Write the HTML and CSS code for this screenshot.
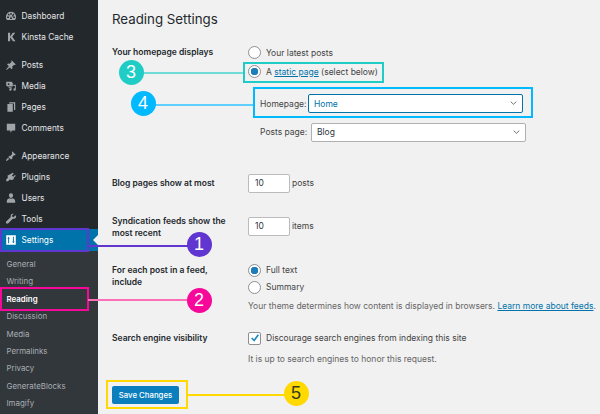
FILE: index.html
```html
<!DOCTYPE html>
<html lang="en">

<head>
    <meta charset="UTF-8">
    <meta name="viewport" content="width=device-width, initial-scale=1.0">
    <title>Reading Settings</title>
    <link rel="stylesheet" href="styles.css">
</head>

<body>
    <div class="admin">
        <nav class="sidebar">
            <ul class="menu">
                <li class="menu-item"><svg class="icon" viewBox="0 0 20 20"><path fill-rule="evenodd" d="M10 3a8.500 8.500 0 0 0-8.500 8.500c0 2 .7 3.700 1.800 5h13.400a8.400 8.400 0 0 0 1.800-5A8.500 8.500 0 0 0 10 3zM8.800 5h2.400v3H8.800zM4.500 7.500L6.200 6l2 2.200-1.600 1.500zM15.500 7.500l-2.400 3.800L11.500 10l2.300-4zM3.500 11h3v2.200h-3zM13.500 11h3v2.200h-3zM10 10.500l1.800 4.500H8.200z"/></svg>Dashboard</li>
                <li class="menu-item"><svg class="icon" viewBox="0 0 20 20"><path d="M5 3h3.500v6L13 3h4l-5 6.500L17.500 17h-4.200L8.500 10.500V17H5z"/></svg>Kinsta Cache</li>
            </ul>
            <ul class="menu">
                <li class="menu-item"><svg class="icon" viewBox="0 0 20 20"><path d="M11 2l7 7-1.500 1-1-.5-3.500 3 .5 3-1.500 1.500-3-3L3 18l-1 0 0-1 4.500-5-3-3L5 7.500l3 .5 3-3.500-.5-1z"/></svg>Posts</li>
                <li class="menu-item"><svg class="icon" viewBox="0 0 20 20"><path d="M2 3h9l2 2v6H4l-2-2zM6 5.500a1.500 1.500 0 1 0 0 3 1.500 1.500 0 0 0 0-3zM14 8h4v8a2 2 0 1 1-1.500-2V10H14zM6 12h5v4a2 2 0 1 1-1.500-2v-.5H6z"/></svg>Media</li>
                <li class="menu-item"><svg class="icon" viewBox="0 0 20 20"><path d="M7 2h10v13h-2V4H7zM4 5h9v13H4z"/></svg>Pages</li>
                <li class="menu-item"><svg class="icon" viewBox="0 0 20 20"><path d="M3 3h14v11h-5l-3 4v-4H3z"/></svg>Comments</li>
            </ul>
            <ul class="menu">
                <li class="menu-item"><svg class="icon" viewBox="0 0 20 20"><path d="M12 2l6 6-2 1-1-.5-3 3.500.5 2L10 16 5.500 11.500l2-2 1.500.5 3-3.500-.5-1.500zM5 13l2 2-4 3.500L1.500 17z"/></svg>Appearance</li>
                <li class="menu-item"><svg class="icon" viewBox="0 0 20 20"><path d="M14 2l1.500 1.500-3 3 2 2 3-3L19 7l-3 3-1 3-3 1-3-1-3 3H3v-3l3-3-1-3z" transform="translate(-1 1)"/></svg>Plugins</li>
                <li class="menu-item"><svg class="icon" viewBox="0 0 20 20"><path d="M10 2a3.500 3.500 0 0 1 3.500 3.500c0 2.200-1.500 4.500-3.500 4.500S6.500 7.700 6.500 5.500A3.500 3.500 0 0 1 10 2zM3 16c0-3 2-5 4-5.500 1 1 5 1 6 0 2 .5 4 2.500 4 5.500v2H3z"/></svg>Users</li>
                <li class="menu-item"><svg class="icon" viewBox="0 0 20 20"><path d="M17 4l-3 3-2-1-.5-2 3-2.500C12 .5 9.500 2 9.500 5c0 1 .2 1.500.2 1.500L2 14c-1 1-.5 2.500.2 3.200S4.500 18 5.500 17l7.500-7.500s4.500 1 5.500-3c.2-1 0-2-.5-2.500z"/></svg>Tools</li>
                <li class="menu-item menu-current"><svg class="icon" viewBox="0 0 20 20"><path fill-rule="evenodd" d="M2 2h16v16H2zM6 4.500L3.800 7.500H5.200V15.500H6.800V7.500H8.200zM13.200 4.500V12.500H11.800L14 15.500l2.200-3H14.800V4.500z"/></svg>Settings</li>
            </ul>
            <ul class="submenu">
                <li>General</li>
                <li>Writing</li>
                <li class="submenu-current">Reading</li>
                <li>Discussion</li>
                <li>Media</li>
                <li>Permalinks</li>
                <li>Privacy</li>
                <li>GenerateBlocks</li>
                <li>Imagify</li>
            </ul>
        </nav>

        <main class="content">
            <h1 class="title">Reading Settings</h1>

            <div class="row row-home">
                <div class="row-label">Your homepage displays</div>
                <div>
                    <label class="choice"><input type="radio" name="front">Your latest posts</label>
                    <label class="choice choice-second"><input type="radio" name="front" checked><span>A <a href="#">static page</a> (select below)</span></label>
                    <div class="page-pick page-pick-home">
                        <label for="homepage">Homepage:</label>
                        <select id="homepage" class="select select-focus"><option>Home</option></select>
                    </div>
                    <div class="page-pick page-pick-posts">
                        <label for="postspage">Posts page:</label>
                        <select id="postspage" class="select"><option>Blog</option></select>
                    </div>
                </div>
            </div>

            <div class="row row-blog">
                <div class="row-label">Blog pages show at most</div>
                <div class="number-field"><input class="number" type="text" value="10">posts</div>
            </div>

            <div class="row row-synd">
                <div class="row-label"><span class="label-line">Syndication feeds show the</span><span class="label-line">most recent</span></div>
                <div class="number-field"><input class="number" type="text" value="10">items</div>
            </div>

            <div class="row row-feed">
                <div class="row-label">For each post in a feed, include</div>
                <div>
                    <label class="choice"><input type="radio" name="feed" checked>Full text</label>
                    <label class="choice choice-summary"><input type="radio" name="feed">Summary</label>
                    <p class="desc desc-feed">Your theme determines how content is displayed in browsers. <a href="#">Learn more about feeds</a>.</p>
                </div>
            </div>

            <div class="row row-search">
                <div class="row-label">Search engine visibility</div>
                <div>
                    <label class="choice"><input type="checkbox" checked>Discourage search engines from indexing this site</label>
                    <p class="desc desc-search">It is up to search engines to honor this request.</p>
                </div>
            </div>

            <button class="save" type="button">Save Changes</button>
        </main>
    </div>

    <!-- callouts drawn over the screenshot -->
    <div class="note-arrow"></div>

    <div class="box box-teal"></div>
    <div class="line line-teal"></div>
    <div class="dot dot-teal">3</div>

    <div class="box box-blue"></div>
    <div class="line line-blue"></div>
    <div class="dot dot-blue">4</div>

    <div class="box box-purple"></div>
    <div class="line line-purple"></div>
    <div class="dot dot-purple">1</div>

    <div class="box box-pink"></div>
    <div class="line line-pink"></div>
    <div class="dot dot-pink">2</div>

    <div class="box box-yellow"></div>
    <div class="line line-yellow"></div>
    <div class="dot dot-yellow">5</div>
</body>

</html>
```

FILE: styles.css
```css
:root {
    --menu-bg: #23282d;
    --submenu-bg: #32373c;
    --page-bg: #f1f1f1;
    --text-color: #444;
    --link-color: #0073aa;
    --teal: #1fcdc6;
    --blue: #00b9ff;
    --purple: #6035d0;
    --pink: #f5089a;
    --yellow: #ffd900;
}

html,
body {
    margin: 0;
    height: 100%;
    overflow: hidden;
}

body {
    position: relative;
    font-family: Inter, 'Liberation Sans', sans-serif;
    font-size: 8.500px;
    color: var(--text-color);
    background-color: var(--page-bg);
}

.admin {
    display: flex;
    height: 414px;
}

/* sidebar */

.sidebar {
    width: 98px;
    flex-shrink: 0;
    background-color: var(--menu-bg);
    color: #e4e5e6;
    padding-top: 5px;
    box-sizing: border-box;
}

.menu,
.submenu {
    list-style: none;
    margin: 0;
    padding: 0;
}

.menu {
    margin-bottom: 7px;
}

.menu:nth-child(3) {
    margin-bottom: 0;
}

.menu-item {
    display: flex;
    align-items: center;
    gap: 5px;
    height: 21px;
    padding-left: 4.500px;
    font-size: 8.300px;
}

.icon {
    width: 12px;
    height: 12px;
    fill: #a0a5aa;
    flex-shrink: 0;
}

.menu-current {
    background-color: #0073aa;
    color: #fff;
    height: 22px;
}

.menu-current .icon {
    fill: #fff;
}

.submenu {
    background-color: var(--submenu-bg);
    color: #a9aeb2;
    padding-top: 5px;
    height: 164px;
    font-size: 7.900px;
}

.submenu li {
    height: 17.400px;
    line-height: 17.400px;
    padding-left: 6.500px;
}

.submenu .submenu-current {
    color: #fff;
    font-weight: 600;
}

/* main form */

.content {
    flex: 1;
    padding-left: 14px;
}

.title {
    margin: 10px 0 0;
    font-size: 13.300px;
    font-weight: 400;
    line-height: 18px;
    color: #23282d;
}

.row {
    display: grid;
    grid-template-columns: 136px 1fr;
}

.row-label {
    width: 120px;
    font-weight: 600;
    line-height: 12.500px;
    color: #23282d;
}

.label-line {
    display: block;
    width: fit-content;
}

.row-home {
    margin-top: 18px;
}

.row-blog {
    margin-top: 32px;
    align-items: center;
}

.row-synd {
    margin-top: 22px;
}

.row-synd .number-field {
    align-self: start;
    margin-top: 2px;
}

.row-feed {
    margin-top: 24px;
}

.row-search {
    margin-top: 20px;
}

.choice {
    display: flex;
    align-items: center;
    height: 13px;
}

.choice input {
    appearance: none;
    width: 13px;
    height: 13px;
    margin: 0 5px 0 0;
    flex-shrink: 0;
    border: 1px solid #8c8f94;
    background-color: #fff;
    box-sizing: border-box;
}

.choice input[type="radio"] {
    border-radius: 50%;
}

.choice input[type="radio"]:checked {
    background: radial-gradient(circle, #1e7cb8 0 3.500px, #fff 4px);
}

.choice input[type="checkbox"] {
    border-radius: 2px;
    background: #fff url("data:image/svg+xml,%3Csvg xmlns='http://www.w3.org/2000/svg' viewBox='0 0 12 12'%3E%3Cpath d='M2 6l3 3 5-7' fill='none' stroke='%231e8cbe' stroke-width='2'/%3E%3C/svg%3E") center / 10px no-repeat;
}

.choice-second {
    margin-top: 6px;
}

.choice-summary {
    margin-top: 4px;
}

a {
    color: var(--link-color);
}

.page-pick {
    display: flex;
    align-items: center;
    margin-left: 12px;
}

.page-pick label {
    width: 48px;
    flex-shrink: 0;
}

.page-pick-home {
    margin-top: 16px;
}

.page-pick-posts {
    margin-top: 9.500px;
}

.page-pick-posts label {
    width: 51px;
}

.select {
    appearance: none;
    width: 215px;
    height: 19px;
    padding: 0 5px;
    border: 1px solid #b0b0b0;
    border-radius: 2px;
    font-family: inherit;
    font-size: 8.500px;
    color: #32373c;
    background: #fff url("data:image/svg+xml,%3Csvg xmlns='http://www.w3.org/2000/svg' viewBox='0 0 10 6'%3E%3Cpath d='M1 1l4 4 4-4' fill='none' stroke='%23555' stroke-width='1.200'/%3E%3C/svg%3E") right 5px center / 7px no-repeat;
}

.select-focus {
    border-color: #0073aa;
    color: #0073aa;
}

.number-field {
    display: flex;
    align-items: center;
    gap: 2px;
}

.number {
    width: 42px;
    height: 19px;
    padding: 0 6px;
    border: 1px solid #bbb;
    border-radius: 2px;
    box-sizing: border-box;
    font-family: inherit;
    font-size: 8.500px;
    color: #32373c;
    background-color: #fff;
}

.desc {
    margin: 0;
    line-height: 12px;
    color: #666;
}

.desc-feed {
    margin-top: 6px;
    white-space: nowrap;
}

.desc-search {
    margin-top: 8px;
}

.save {
    display: block;
    margin-top: 21px;
    width: 67px;
    height: 18px;
    padding: 0;
    border: none;
    border-radius: 2px;
    background-color: #0b7fbd;
    color: #fff;
    font-family: inherit;
    font-size: 7.800px;
    font-weight: 500;
}

/* callouts */

.note-arrow {
    position: absolute;
    left: 93px;
    top: 235px;
    width: 0;
    height: 0;
    border: 5px solid transparent;
    border-left: none;
    border-right-color: var(--page-bg);
}

.box {
    position: absolute;
    border: 2px solid;
    box-sizing: border-box;
}

.line {
    position: absolute;
    height: 2px;
}

.dot {
    position: absolute;
    width: 25px;
    height: 25px;
    border-radius: 50%;
    color: #fff;
    font-family: 'Liberation Sans', sans-serif;
    font-size: 18px;
    line-height: 25px;
    text-align: center;
}

.box-teal {
    left: 243px;
    top: 62px;
    width: 141px;
    height: 21px;
    border-color: var(--teal);
}

.line-teal {
    left: 143px;
    top: 71.500px;
    width: 100px;
    background-color: #6fdcd8;
}

.dot-teal {
    left: 118.500px;
    top: 60px;
    background-color: var(--teal);
}

.box-blue {
    left: 253px;
    top: 87px;
    width: 280px;
    height: 31px;
    border-color: var(--blue);
}

.line-blue {
    left: 155px;
    top: 103.500px;
    width: 98px;
    background-color: #5ccfff;
}

.dot-blue {
    left: 130.500px;
    top: 91px;
    background-color: var(--blue);
}

.box-purple {
    left: 0;
    top: 228px;
    width: 89px;
    height: 24px;
    border-color: var(--purple);
}

.line-purple {
    left: 88px;
    top: 245px;
    width: 100px;
    background-color: var(--purple);
}

.dot-purple {
    left: 186.500px;
    top: 232px;
    background-color: var(--purple);
}

.box-pink {
    left: 0;
    top: 287px;
    width: 89px;
    height: 24px;
    border-color: var(--pink);
}

.line-pink {
    left: 88px;
    top: 299px;
    width: 100px;
    background-color: #fb6fb8;
}

.dot-pink {
    left: 186.500px;
    top: 287.500px;
    background-color: var(--pink);
}

.box-yellow {
    left: 106px;
    top: 379.500px;
    width: 82px;
    height: 29px;
    border-color: var(--yellow);
}

.line-yellow {
    left: 187px;
    top: 393.500px;
    width: 98px;
    background-color: var(--yellow);
}

.dot-yellow {
    left: 283.500px;
    top: 381px;
    background-color: var(--yellow);
    color: #3a3a20;
}
```
